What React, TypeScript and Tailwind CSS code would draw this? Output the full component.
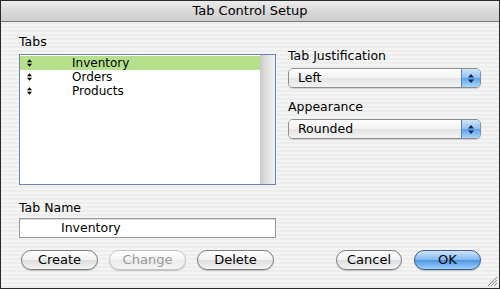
import React from 'react';

const font = { fontFamily: '"DejaVu Sans", "Liberation Sans", sans-serif' };

const tabs = ['Inventory', 'Orders', 'Products'];

function UpDown({ className = '', w = 6, h = 9 }: { className?: string; w?: number; h?: number }) {
  return (
    <svg width={w} height={h} viewBox="0 0 6 9" className={className}>
      <path d="M3 0 L6 3.5 L0 3.5 Z" fill="currentColor" />
      <path d="M3 9 L6 5.5 L0 5.5 Z" fill="currentColor" />
    </svg>
  );
}

function PopUp({ value }: { value: string }) {
  return (
    <div className="flex h-[20px] w-[193px] rounded-[5px] border border-[#8d8d8d] overflow-hidden shadow-[0_1px_1px_rgba(0,0,0,0.15)]">
      <div className="flex-1 flex items-center pl-[9px] text-[12.5px] text-black bg-[linear-gradient(#ffffff,#f2f2f2_50%,#e4e4e4_51%,#f4f4f4)]">
        {value}
      </div>
      <div className="w-[19px] flex items-center justify-center border-l border-[#5a7fb8] text-[#0d2550] bg-[linear-gradient(#cfe5fb,#8ec0f2_50%,#5aa2ea_51%,#a8d6fb)]">
        <UpDown />
      </div>
    </div>
  );
}

function AquaButton({ label, w, disabled = false, primary = false }: { label: string; w: string; disabled?: boolean; primary?: boolean }) {
  const base = 'h-[20px] rounded-full flex items-center justify-center text-[13px] shadow-[0_1px_1px_rgba(0,0,0,0.2)]';
  const skin = primary
    ? 'border border-[#3e5e93] text-black bg-[linear-gradient(#cfe4fa,#7fb6ee_50%,#4a94e4_51%,#9fd0fa)]'
    : disabled
    ? 'border border-[#c4c4c4] text-[#9a9a9a] bg-[linear-gradient(#ffffff,#f4f4f4_50%,#e9e9e9_51%,#f6f6f6)]'
    : 'border border-[#7d7d7d] text-black bg-[linear-gradient(#ffffff,#f1f1f1_50%,#dedede_51%,#f4f4f4)]';
  return <div className={`${base} ${skin} ${w}`}>{label}</div>;
}

export default function App() {
  return (
    <div style={font} className="relative w-[500px] h-[289px] flex flex-col border border-[#2a2a2a] overflow-hidden bg-[repeating-linear-gradient(0deg,#ededed_0px,#ededed_2px,#f4f4f4_2px,#f4f4f4_4px)]">
      {/* title bar */}
      <div className="h-[21px] shrink-0 flex items-center justify-center border-b border-[#7b7b7b] text-[13px] text-black bg-[linear-gradient(#ececec,#d9d9d9_50%,#cdcdcd)]">
        Tab Control Setup
      </div>

      <div className="flex-1 flex flex-col pl-[18px] pr-[18px]">
        <div className="flex gap-[12px]">
          {/* left column */}
          <div className="w-[257px] flex flex-col">
            <div className="mt-[12px] h-[16px] text-[12.5px] leading-[16px] text-black">Tabs</div>
            <div className="mt-[4px] h-[131px] flex border border-[#6a85ad] bg-white">
              <div className="flex-1 flex flex-col pt-[1px]">
                {tabs.map((t, i) => (
                  <div key={t} className={`h-[14px] flex items-center text-[12px] leading-[14px] text-black ${i === 0 ? 'bg-[#b6e08b]' : ''}`}>
                    <UpDown className="ml-[7px] text-black" w={5} h={8} />
                    <span className="ml-[40px]">{t}</span>
                  </div>
                ))}
              </div>
              <div className="w-[15px] bg-[linear-gradient(90deg,#c9c9c9,#dedede_40%,#f2f2f2)]" />
            </div>

            <div className="mt-[15px] h-[16px] text-[12.5px] leading-[16px] text-black">Tab Name</div>
            <div className="mt-[2px] h-[20px] border border-[#9a9a9a] bg-white shadow-[inset_0_1px_1px_rgba(0,0,0,0.15)] flex items-center pl-[41px] text-[12.5px] text-black">
              Inventory
            </div>
          </div>

          {/* right column */}
          <div className="w-[193px] flex flex-col">
            <div className="mt-[26px] h-[16px] text-[12.5px] leading-[16px] text-black">Tab Justification</div>
            <div className="mt-[4px]"><PopUp value="Left" /></div>
            <div className="mt-[11px] h-[16px] text-[12.5px] leading-[16px] text-black">Appearance</div>
            <div className="mt-[4px]"><PopUp value="Rounded" /></div>
          </div>
        </div>

        {/* button row */}
        <div className="mt-[12px] flex items-center">
          <div className="flex gap-[11px] pl-[2px]">
            <AquaButton label="Create" w="w-[77px]" />
            <AquaButton label="Change" w="w-[77px]" disabled />
            <AquaButton label="Delete" w="w-[77px]" />
          </div>
          <div className="ml-auto flex gap-[12px]">
            <AquaButton label="Cancel" w="w-[66px]" />
            <AquaButton label="OK" w="w-[67px]" primary />
          </div>
        </div>
      </div>

      {/* resize grip */}
      <svg width="12" height="12" viewBox="0 0 12 12" className="absolute right-[1px] bottom-[1px]">
        <path d="M11 2 L2 11 M11 5 L5 11 M11 8 L8 11" stroke="#8a8a8a" strokeWidth="1" />
      </svg>
    </div>
  );
}
